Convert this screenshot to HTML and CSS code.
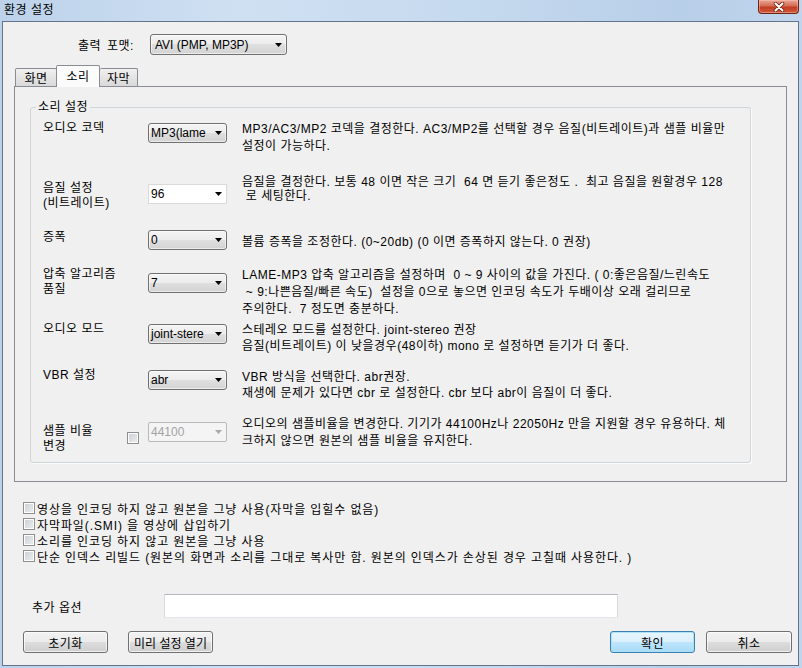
FILE: index.html
```html
<!DOCTYPE html>
<html lang="ko">
<head>
<meta charset="utf-8">
<title>환경 설정</title>
<link rel="stylesheet" href="styles.css">
</head>
<body>
<div class="window">
  <div class="titlebar">
    <span class="title">환경 설정</span>
    <div class="close-btn">
      <svg width="12" height="10" viewBox="0 0 12 10"><path d="M2.5 1.5 L9.5 8.5 M9.5 1.5 L2.5 8.5" stroke="#6a2214" stroke-width="3.6" stroke-linecap="round"/><path d="M2.5 1.5 L9.5 8.5 M9.5 1.5 L2.5 8.5" stroke="#fff" stroke-width="2" stroke-linecap="round"/></svg>
    </div>
  </div>
  <div class="client">
    <div class="format-row">
      <span class="format-label">출력 포맷:</span>
      <div class="combo combo-format"><span class="combo-text">AVI (PMP, MP3P)</span><svg class="arrow" width="7" height="4" viewBox="0 0 7 4"><path d="M0 0H7L3.5 4Z"/></svg></div>
    </div>
    <div class="tabs">
      <div class="tab tab-first">화면</div>
      <div class="tab tab-active">소리</div>
      <div class="tab tab-last">자막</div>
    </div>
    <div class="tab-panel">
      <fieldset class="group">
        <legend class="group-title">소리 설정</legend>
        <div class="row r1">
          <div class="lbl">오디오 코덱</div>
          <div class="chk-cell"></div>
          <div class="combo"><span class="combo-text">MP3(lame</span><svg class="arrow" width="7" height="4" viewBox="0 0 7 4"><path d="M0 0H7L3.5 4Z"/></svg></div>
          <div class="desc">MP3/AC3/MP2 코덱을 결정한다. AC3/MP2를 선택할 경우 음질(비트레이트)과 샘플 비율만<br>설정이 가능하다.</div>
        </div>
        <div class="row r2">
          <div class="lbl">음질 설정<br>(비트레이트)</div>
          <div class="chk-cell"></div>
          <div class="combo combo-white"><span class="combo-text">96</span><svg class="arrow" width="7" height="4" viewBox="0 0 7 4"><path d="M0 0H7L3.5 4Z"/></svg></div>
          <div class="desc">음질을 결정한다. 보통 48 이면 작은 크기  64 면 듣기 좋은정도 .  최고 음질을 원할경우 128<br> 로 세팅한다.</div>
        </div>
        <div class="row r3">
          <div class="lbl">증폭</div>
          <div class="chk-cell"></div>
          <div class="combo"><span class="combo-text">0</span><svg class="arrow" width="7" height="4" viewBox="0 0 7 4"><path d="M0 0H7L3.5 4Z"/></svg></div>
          <div class="desc">볼륨 증폭을 조정한다. (0~20db) (0 이면 증폭하지 않는다. 0 권장)</div>
        </div>
        <div class="row r4">
          <div class="lbl">압축 알고리즘<br>품질</div>
          <div class="chk-cell"></div>
          <div class="combo"><span class="combo-text">7</span><svg class="arrow" width="7" height="4" viewBox="0 0 7 4"><path d="M0 0H7L3.5 4Z"/></svg></div>
          <div class="desc">LAME-MP3 압축 알고리즘을 설정하며  0 ~ 9 사이의 값을 가진다. ( 0:좋은음질/느린속도<br> ~ 9:나쁜음질/빠른 속도)  설정을 0으로 놓으면 인코딩 속도가 두배이상 오래 걸리므로<br>주의한다.  7 정도면 충분하다.</div>
        </div>
        <div class="row r5">
          <div class="lbl">오디오 모드</div>
          <div class="chk-cell"></div>
          <div class="combo"><span class="combo-text">joint-stere</span><svg class="arrow" width="7" height="4" viewBox="0 0 7 4"><path d="M0 0H7L3.5 4Z"/></svg></div>
          <div class="desc">스테레오 모드를 설정한다. joint-stereo 권장<br>음질(비트레이트) 이 낮을경우(48이하) mono 로 설정하면 듣기가 더 좋다.</div>
        </div>
        <div class="row r6">
          <div class="lbl">VBR 설정</div>
          <div class="chk-cell"></div>
          <div class="combo"><span class="combo-text">abr</span><svg class="arrow" width="7" height="4" viewBox="0 0 7 4"><path d="M0 0H7L3.5 4Z"/></svg></div>
          <div class="desc">VBR 방식을 선택한다. abr권장.<br>재생에 문제가 있다면 cbr 로 설정한다. cbr 보다 abr이 음질이 더 좋다.</div>
        </div>
        <div class="row r7">
          <div class="lbl">샘플 비율<br>변경</div>
          <div class="chk-cell"><span class="cb"></span></div>
          <div class="combo combo-disabled"><span class="combo-text">44100</span><svg class="arrow" width="7" height="4" viewBox="0 0 7 4"><path d="M0 0H7L3.5 4Z"/></svg></div>
          <div class="desc">오디오의 샘플비율을 변경한다. 기기가 44100Hz나 22050Hz 만을 지원할 경우 유용하다. 체<br>크하지 않으면 원본의 샘플 비율을 유지한다.</div>
        </div>
      </fieldset>
    </div>
    <div class="checks">
      <div class="check-row"><span class="cb"></span><span class="check-text">영상을 인코딩 하지 않고 원본을 그냥 사용(자막을 입힐수 없음)</span></div>
      <div class="check-row"><span class="cb"></span><span class="check-text">자막파일(.SMI) 을 영상에 삽입하기</span></div>
      <div class="check-row"><span class="cb"></span><span class="check-text">소리를 인코딩 하지 않고 원본을 그냥 사용</span></div>
      <div class="check-row"><span class="cb"></span><span class="check-text">단순 인덱스 리빌드 (원본의 화면과 소리를 그대로 복사만 함. 원본의 인덱스가 손상된 경우 고칠때 사용한다. )</span></div>
    </div>
    <div class="extra-row">
      <span class="extra-label">추가 옵션</span>
      <div class="text-input"></div>
    </div>
    <div class="button-row">
      <button class="btn">초기화</button>
      <button class="btn btn-preset">미리 설정 열기</button>
      <button class="btn btn-default">확인</button>
      <button class="btn btn-cancel">취소</button>
    </div>
  </div>
</div>
</body>
</html>
```
FILE: styles.css
```css
html, body {
  margin: 0;
  padding: 0;
}
body {
  width: 802px;
  height: 668px;
  overflow: hidden;
  font-family: "Liberation Sans", "Noto Sans CJK KR", sans-serif;
  font-size: 12px;
  letter-spacing: 0.5px;
  color: #000;
}
.window {
  width: 802px;
  height: 668px;
  display: flex;
  flex-direction: column;
  background: linear-gradient(to right, #bcd2ea 0%, #cfe0f2 30%, #c5d9ee 60%, #b8cfe9 85%, #c0d5ec 100%);
}
.titlebar {
  height: 21px;
  flex: none;
  display: flex;
  justify-content: space-between;
  align-items: flex-start;
}
.title {
  padding-left: 4px;
  line-height: 20px;
}
.close-btn {
  width: 41px;
  height: 14px;
  margin-right: 3px;
  box-sizing: border-box;
  border: 1px solid #6e2314;
  border-top: none;
  border-radius: 0 0 4px 4px;
  background: linear-gradient(#e9a796 0%, #d66c54 45%, #c23c22 55%, #cf5a3e 100%);
  box-shadow: inset 0 0 0 1px rgba(255, 200, 185, 0.45);
  display: flex;
  align-items: center;
  justify-content: center;
}
.client {
  flex: 1;
  margin: 0 3px 2px 2px;
  border: 1px solid #63758a;
  background: #f0f0f0;
  display: flex;
  flex-direction: column;
}

/* format */
.format-row {
  display: flex;
  align-items: center;
  margin-top: 12px;
  padding-left: 75px;
  height: 21px;
}
.format-label {
  width: 72px;
  word-spacing: 2px;
}
.combo {
  box-sizing: border-box;
  height: 20px;
  border: 1px solid #707070;
  border-radius: 3px;
  background: linear-gradient(#f4f4f4 0%, #ececec 50%, #dfdfdf 50%, #d3d3d3 100%);
  box-shadow: inset 0 0 0 1px rgba(255, 255, 255, 0.55);
  display: flex;
  align-items: center;
  padding: 0 4px 0 2px;
  letter-spacing: 0;
}
.combo-format {
  width: 137px;
  height: 21px;
  padding-left: 4px;
}
.combo-text {
  white-space: nowrap;
  line-height: 16px;
}
.arrow {
  margin-left: auto;
  flex: none;
  fill: #000;
}
.combo-white {
  border: 1px solid #dadada;
  border-radius: 0;
  background: #fff;
  box-shadow: none;
}
.combo-disabled {
  border: 1px solid #b9b9b9;
  border-radius: 2px;
  background: #f4f4f4;
  box-shadow: none;
  color: #a3a3a3;
}
.combo-disabled .arrow {
  fill: #a8a8a8;
}

/* tabs */
.tabs {
  display: flex;
  align-items: flex-end;
  margin-top: 10px;
  margin-left: 12px;
  height: 21px;
  position: relative;
  z-index: 1;
}
.tab {
  box-sizing: border-box;
  height: 18px;
  border: 1px solid #898c95;
  border-bottom: none;
  background: linear-gradient(#f1f1f1, #e4e4e4 50%, #d9d9d9);
  display: flex;
  align-items: center;
  justify-content: center;
  border-radius: 2px 2px 0 0;
}
.tab-first {
  width: 42px;
}
.tab-last {
  width: 38px;
  border-left: none;
}
.tab-active {
  width: 44px;
  height: 22px;
  margin-bottom: -1px;
  margin-left: -1px;
  padding-bottom: 3px;
  background: #fbfbfb;
  border-radius: 2px 2px 0 0;
}
.tab-panel {
  box-sizing: border-box;
  height: 396px;
  margin: 0 11px 0 11px;
  border: 1px solid #898c95;
  background: #f0f0f0;
  padding: 13px 0 0 15px;
}

/* group */
.group {
  box-sizing: border-box;
  width: 721px;
  margin: 0;
  padding: 6px 0 0 12px;
  min-inline-size: 0;
  border: 1px solid #d0d5d9;
  border-radius: 3px;
  box-shadow: 1px 1px 0 #fbfbfb;
}
.group-title {
  margin-left: -7px;
  padding: 0 2px;
  line-height: 15px;
}
.row {
  display: grid;
  grid-template-columns: 84px 21px 79px 1fr;
  align-items: start;
}
.lbl {
  line-height: 15px;
  white-space: nowrap;
}
.desc {
  margin-left: 15px;
  white-space: pre;
  line-height: 17px;
}
.r1 { height: 54px; }
.r1 .combo { margin-top: 2px; }
.r2 { height: 53px; }
.r2 .lbl { margin-top: 6px; }
.r2 .combo { margin-top: 9px; }
.r2 .desc { line-height: 14px; }
.r3 { height: 39px; }
.r3 .lbl { margin-top: 2px; }
.r3 .combo { margin-top: 2px; }
.r3 .desc { margin-top: 6px; }
.r4 { height: 55px; }
.r4 .combo { margin-top: 6px; }
.r5 { height: 46px; }
.r5 .combo { margin-top: 2px; }
.r5 .desc { line-height: 16px; }
.r6 { height: 48px; }
.r6 .combo { margin-top: 2px; }
.r6 .desc { line-height: 16px; margin-top: 1px; }
.r7 { height: 46px; }
.r7 .lbl { margin-top: 8px; }
.r7 .cb { margin-top: 16px; }
.r7 .combo { margin-top: 6px; }

.cb {
  display: block;
  box-sizing: border-box;
  width: 12px;
  height: 12px;
  border: 1px solid #8f8f8f;
  background: linear-gradient(135deg, #cbcfd4, #eeeeee);
  box-shadow: inset 0 0 0 1px #fdfdfd;
  flex: none;
}

/* checks */
.checks {
  margin-top: 18px;
  padding-left: 20px;
}
.check-row {
  display: flex;
  align-items: center;
  height: 16px;
}
.check-text {
  margin-left: 2px;
  white-space: pre;
  letter-spacing: 0.9px;
}

/* extra */
.extra-row {
  display: flex;
  align-items: center;
  margin-top: 30px;
  padding-left: 29px;
}
.extra-label {
  width: 132px;
}
.text-input {
  box-sizing: border-box;
  width: 454px;
  height: 24px;
  border: 1px solid;
  border-color: #b3b7bd #d6dade #e3e6ea #d6dade;
  background: #fff;
}

/* buttons */
.button-row {
  display: flex;
  margin-top: 13px;
  padding: 0 6px 0 20px;
}
.btn {
  box-sizing: border-box;
  width: 85px;
  height: 22px;
  margin: 0;
  padding: 0;
  border: 1px solid #707070;
  border-radius: 3px;
  background: linear-gradient(#f2f2f2 0%, #ebebeb 50%, #dddddd 50%, #cfcfcf 100%);
  box-shadow: inset 0 0 0 1px rgba(255, 255, 255, 0.7);
  font-family: inherit;
  font-size: 12px;
  letter-spacing: 0.5px;
  color: #000;
  display: flex;
  align-items: center;
  justify-content: center;
}
.btn-preset {
  margin-left: 20px;
  letter-spacing: 0;
  white-space: nowrap;
}
.btn-default {
  margin-left: auto;
  border-color: #3c7fb1;
  background: linear-gradient(#e9f6fd 0%, #d8effc 50%, #bee6fd 50%, #a9daf5 100%);
  box-shadow: inset 0 0 0 1px rgba(170, 225, 250, 0.9);
}
.btn-cancel {
  margin-left: 11px;
  width: 86px;
}
```
